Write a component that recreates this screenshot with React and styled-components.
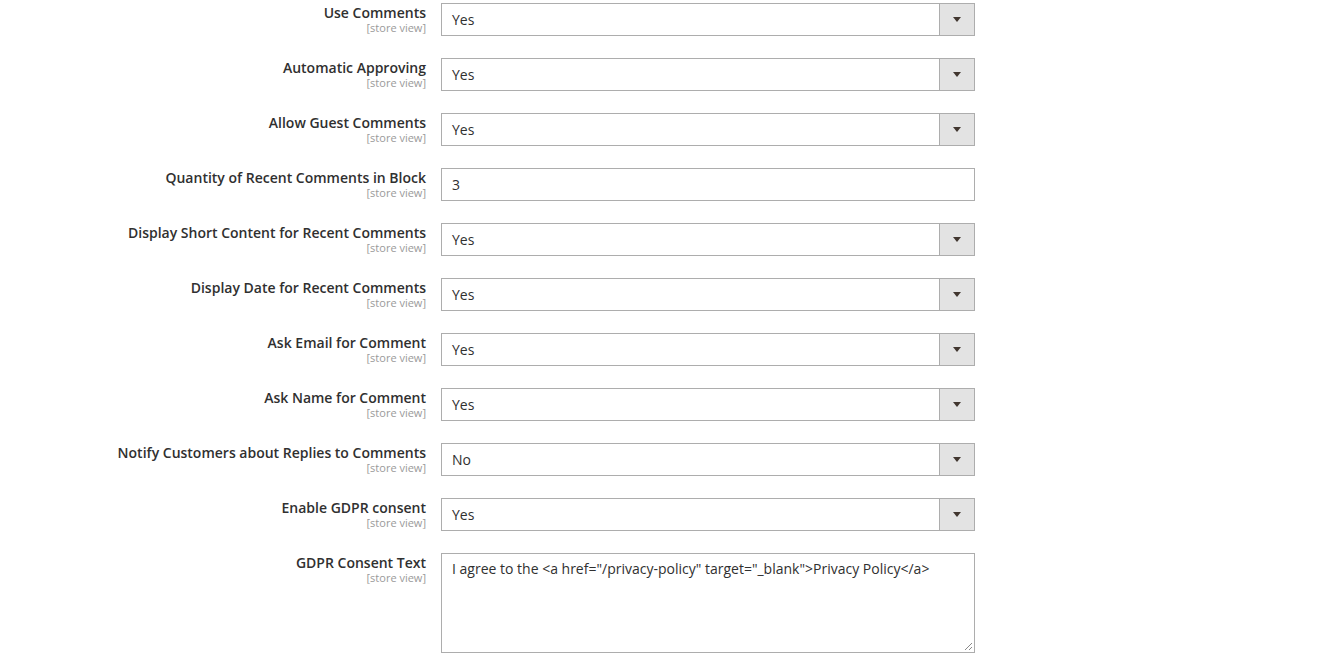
import React from "react";
import styled, { createGlobalStyle } from "styled-components";

const Global = createGlobalStyle`
  html, body { margin: 0; padding: 0; background: #fff; }
  body { font-family: "Open Sans", "Liberation Sans", sans-serif; color: #303030; }
`;

const Form = styled.div`
  display: flex;
  flex-direction: column;
  gap: 22px;
  padding-top: 3px;
`;

const Row = styled.div`
  display: grid;
  grid-template-columns: 426px 534px;
  column-gap: 15px;
  align-items: start;
`;

const LabelCol = styled.div`
  display: flex;
  flex-direction: column;
  align-items: flex-end;
  text-align: right;
  padding-top: 2px;
`;

const LabelText = styled.span`
  font-size: 14px;
  line-height: 16px;
  font-weight: 600;
  color: #303030;
`;

const Scope = styled.span`
  font-size: 11px;
  line-height: 13px;
  color: #9a9a9a;
  margin-top: 0;
`;

const SelectBox = styled.div`
  display: flex;
  height: 33px;
  box-sizing: border-box;
  border: 1px solid #adadad;
  background: #fff;
`;

const SelectValue = styled.div`
  flex: 1;
  display: flex;
  align-items: center;
  padding-left: 10px;
  font-size: 14px;
  color: #303030;
`;

const SelectButton = styled.div`
  width: 34px;
  border-left: 1px solid #adadad;
  background: #e3e3e3;
  display: flex;
  align-items: center;
  justify-content: center;
`;

const Arrow = styled.span`
  width: 0;
  height: 0;
  border-left: 4px solid transparent;
  border-right: 4px solid transparent;
  border-top: 5px solid #41362f;
`;

const Input = styled.div`
  height: 33px;
  box-sizing: border-box;
  border: 1px solid #adadad;
  display: flex;
  align-items: center;
  padding-left: 10px;
  font-size: 14px;
  color: #303030;
`;

const TextArea = styled.div`
  position: relative;
  height: 100px;
  box-sizing: border-box;
  border: 1px solid #adadad;
  padding: 5px 10px;
  font-size: 14px;
  line-height: 20px;
  color: #303030;
`;

const Grip = styled.svg`
  position: absolute;
  right: 1px;
  bottom: 1px;
`;

const fields = [
  { label: "Use Comments", type: "select", value: "Yes" },
  { label: "Automatic Approving", type: "select", value: "Yes" },
  { label: "Allow Guest Comments", type: "select", value: "Yes" },
  { label: "Quantity of Recent Comments in Block", type: "input", value: "3" },
  { label: "Display Short Content for Recent Comments", type: "select", value: "Yes" },
  { label: "Display Date for Recent Comments", type: "select", value: "Yes" },
  { label: "Ask Email for Comment", type: "select", value: "Yes" },
  { label: "Ask Name for Comment", type: "select", value: "Yes" },
  { label: "Notify Customers about Replies to Comments", type: "select", value: "No" },
  { label: "Enable GDPR consent", type: "select", value: "Yes" },
  {
    label: "GDPR Consent Text",
    type: "textarea",
    value: 'I agree to the <a href="/privacy-policy" target="_blank">Privacy Policy</a>',
  },
];

function Control({ type, value }) {
  if (type === "select") {
    return (
      <SelectBox>
        <SelectValue>{value}</SelectValue>
        <SelectButton>
          <Arrow />
        </SelectButton>
      </SelectBox>
    );
  }
  if (type === "input") return <Input>{value}</Input>;
  return (
    <TextArea>
      {value}
      <Grip width="10" height="10" viewBox="0 0 10 10">
        <path d="M9 2 L2 9 M9 6 L6 9" stroke="#8a8a8a" strokeWidth="1" />
      </Grip>
    </TextArea>
  );
}

export default function App() {
  return (
    <>
      <Global />
      <Form>
        {fields.map((f) => (
          <Row key={f.label}>
            <LabelCol>
              <LabelText>{f.label}</LabelText>
              <Scope>[store view]</Scope>
            </LabelCol>
            <Control type={f.type} value={f.value} />
          </Row>
        ))}
      </Form>
    </>
  );
}
